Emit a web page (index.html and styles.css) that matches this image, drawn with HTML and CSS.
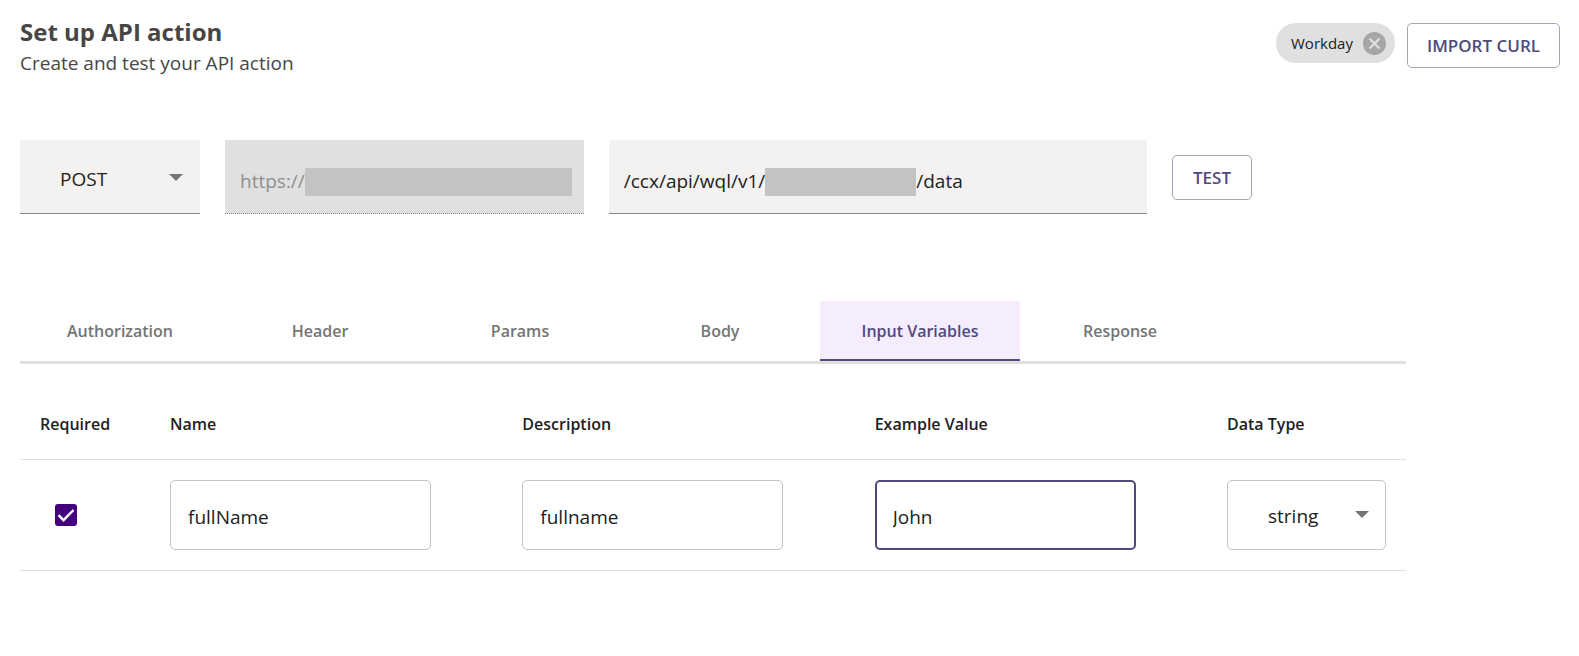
FILE: index.html
```html
<!DOCTYPE html>
<html lang="en">
<head>
  <meta charset="utf-8">
  <meta name="viewport" content="width=device-width, initial-scale=1">
  <title>Set up API action</title>
  <link rel="stylesheet" href="styles.css">
</head>
<body>
  <main class="page">
    <header class="header">
      <div>
        <h1 class="title">Set up API action</h1>
        <p class="subtitle">Create and test your API action</p>
      </div>
      <div class="header-actions">
        <div class="chip">
          <span>Workday</span>
          <button class="chip-remove" type="button" aria-label="Remove Workday">
            <svg viewBox="2 2 20 20" width="23" height="23" aria-hidden="true">
              <path d="M12 2C6.47 2 2 6.47 2 12s4.47 10 10 10 10-4.47 10-10S17.53 2 12 2zm5 13.59L15.59 17 12 13.41 8.41 17 7 15.59 10.59 12 7 8.41 8.41 7 12 10.59 15.59 7 17 8.41 13.41 12 17 15.59z" fill="currentColor"/>
            </svg>
          </button>
        </div>
        <button class="button" type="button">IMPORT CURL</button>
      </div>
    </header>

    <form class="request">
      <div class="select-wrap filled">
        <select class="select" aria-label="Method"><option>POST</option></select>
        <svg class="arrow" viewBox="0 0 14 7" width="14" height="7" aria-hidden="true"><path d="M0 0h14L7 7z" fill="currentColor"/></svg>
      </div>
      <div class="filled url disabled">
        <input class="url-input" type="text" value="https://" aria-label="Base URL" disabled>
        <span class="mask mask-host"></span>
      </div>
      <div class="filled url">
        <input class="url-input" type="text" value="/ccx/api/wql/v1/" aria-label="Path start">
        <span class="mask mask-tenant"></span>
        <input class="url-input" type="text" value="/data" aria-label="Path end">
      </div>
      <button class="button" type="button">TEST</button>
    </form>

    <section class="details">
      <div class="tabs" role="tablist">
        <button class="tab" type="button" role="tab">Authorization</button>
        <button class="tab" type="button" role="tab">Header</button>
        <button class="tab" type="button" role="tab">Params</button>
        <button class="tab" type="button" role="tab">Body</button>
        <button class="tab tab-active" type="button" role="tab" aria-selected="true">Input Variables</button>
        <button class="tab" type="button" role="tab">Response</button>
      </div>

      <table class="variables">
        <colgroup>
          <col class="col-required"><col><col><col><col class="col-type">
        </colgroup>
        <thead>
          <tr>
            <th scope="col" id="h-required">Required</th>
            <th scope="col" id="h-name">Name</th>
            <th scope="col" id="h-description">Description</th>
            <th scope="col" id="h-example">Example Value</th>
            <th scope="col" id="h-type">Data Type</th>
          </tr>
        </thead>
        <tbody>
          <tr>
            <td>
              <span class="check">
                <input class="check-input" type="checkbox" aria-labelledby="h-required" checked>
                <svg class="check-mark" viewBox="0 0 22 22" width="22" height="22" aria-hidden="true"><path d="M3.5 11.2l5 5L18.5 6" fill="none" stroke="currentColor" stroke-width="2.4"/></svg>
              </span>
            </td>
            <td><input class="outlined" type="text" value="fullName" aria-labelledby="h-name"></td>
            <td><input class="outlined" type="text" value="fullname" aria-labelledby="h-description"></td>
            <td><input class="outlined outlined-active" type="text" value="John" aria-labelledby="h-example"></td>
            <td>
              <div class="select-wrap boxed">
                <select class="select" aria-labelledby="h-type"><option>string</option></select>
                <svg class="arrow" viewBox="0 0 14 7" width="14" height="7" aria-hidden="true"><path d="M0 0h14L7 7z" fill="currentColor"/></svg>
              </div>
            </td>
          </tr>
        </tbody>
      </table>
    </section>
  </main>
</body>
</html>
```
FILE: styles.css
```css
* {
  box-sizing: border-box;
}

body {
  margin: 0;
  background: #fff;
  color: #212121;
  font-family: "Open Sans", "Segoe UI", sans-serif;
  font-size: 19px;
}

button,
input,
select {
  margin: 0;
  font: inherit;
  color: inherit;
}

.page {
  padding: 16px 19px 0 20px;
}

.header {
  display: flex;
  justify-content: space-between;
  align-items: flex-start;
}

.title {
  margin: 0;
  color: #484644;
  font-size: 24px;
  font-weight: 700;
  line-height: 32px;
}

.subtitle {
  margin: 0;
  color: #484644;
  line-height: 30px;
}

.header-actions {
  display: flex;
  align-items: flex-start;
  gap: 12px;
  padding-top: 7px;
}

.chip {
  display: flex;
  align-items: center;
  gap: 10px;
  height: 40px;
  padding: 0 9px 0 15px;
  border-radius: 20px;
  background: #e0e0e0;
  font-size: 15px;
}

.chip-remove {
  display: flex;
  padding: 0;
  border: 0;
  background: none;
  color: #a6a6a6;
}

.button {
  height: 45px;
  padding: 0 19px;
  border: 1px solid #a5a2bf;
  border-radius: 5px;
  background: #fff;
  color: #4f4a7d;
  font-size: 17px;
  font-weight: 600;
}

.request {
  display: grid;
  grid-template-columns: 180px minmax(0, 2fr) minmax(0, 3fr) 80px;
  align-items: center;
  gap: 25px;
  width: 80%;
  margin-top: 62px;
}

.filled {
  height: 74px;
  border-bottom: 1px solid #8a8886;
  background: #f3f2f0;
}

.select-wrap {
  display: grid;
  grid-template-columns: 1fr 14px;
  align-items: center;
}

.select {
  grid-area: 1 / 1 / 2 / 3;
  width: 100%;
  height: 68px;
  padding: 2px 40px 0;
  border: 0;
  outline: 0;
  background: none;
  appearance: none;
}

.arrow {
  grid-area: 1 / 2;
  color: #757575;
  pointer-events: none;
}

.filled.select-wrap {
  padding-right: 17px;
  padding-top: 2px;
}

.url {
  display: flex;
  align-items: center;
  padding: 11px 12px 0 15px;
}

.url-input {
  field-sizing: content;
  padding: 0 0 3px;
  border: 0;
  outline: 0;
  background: none;
}

.disabled {
  border-bottom-style: dotted;
  background: #e0e0e0;
  color: #8f8f8f;
}

.mask {
  height: 28px;
  background: #c3c3c3;
}

.mask-host {
  flex: 1;
}

.mask-tenant {
  width: 151px;
}

.details {
  width: 90%;
  margin-top: 87px;
}

.tabs {
  display: flex;
  border-bottom: 3px solid #e0e0e0;
}

.tab {
  flex: 0 1 200px;
  height: 60px;
  padding: 2px 0 0;
  border: 0;
  border-bottom: 2px solid transparent;
  background: none;
  color: #757575;
  font-size: 16px;
  font-weight: 600;
}

.tab-active {
  border-bottom-color: #4f4a7d;
  background: #f5edfe;
  color: #4f4a7d;
}

.variables {
  width: 100%;
  margin-top: 26px;
  border-collapse: collapse;
  table-layout: fixed;
}

.col-required {
  width: 130px;
}

.col-type {
  width: 199px;
}

.variables th,
.variables td {
  padding: 0 20px;
  border-bottom: 1px solid #e0e0e0;
  text-align: left;
}

.variables th {
  height: 69px;
  font-size: 16px;
  font-weight: 600;
}

.variables td {
  height: 111px;
}

.outlined {
  display: block;
  width: 100%;
  max-width: 261px;
  height: 70px;
  padding: 4px 17px 0;
  border: 1px solid #c4c4c4;
  border-radius: 5px;
  outline: 0;
  background: #fff;
}

.outlined-active {
  padding: 4px 16px 0;
  border: 2px solid #4f4a7d;
}

.boxed {
  height: 70px;
  padding-right: 16px;
  border: 1px solid #c4c4c4;
  border-radius: 5px;
}

.check {
  display: grid;
  width: 22px;
  margin-left: 15px;
}

.check-input {
  grid-area: 1 / 1;
  width: 22px;
  height: 22px;
  border-radius: 3px;
  background: #42007c;
  appearance: none;
}

.check-mark {
  grid-area: 1 / 1;
  color: #fff;
  pointer-events: none;
}
```
